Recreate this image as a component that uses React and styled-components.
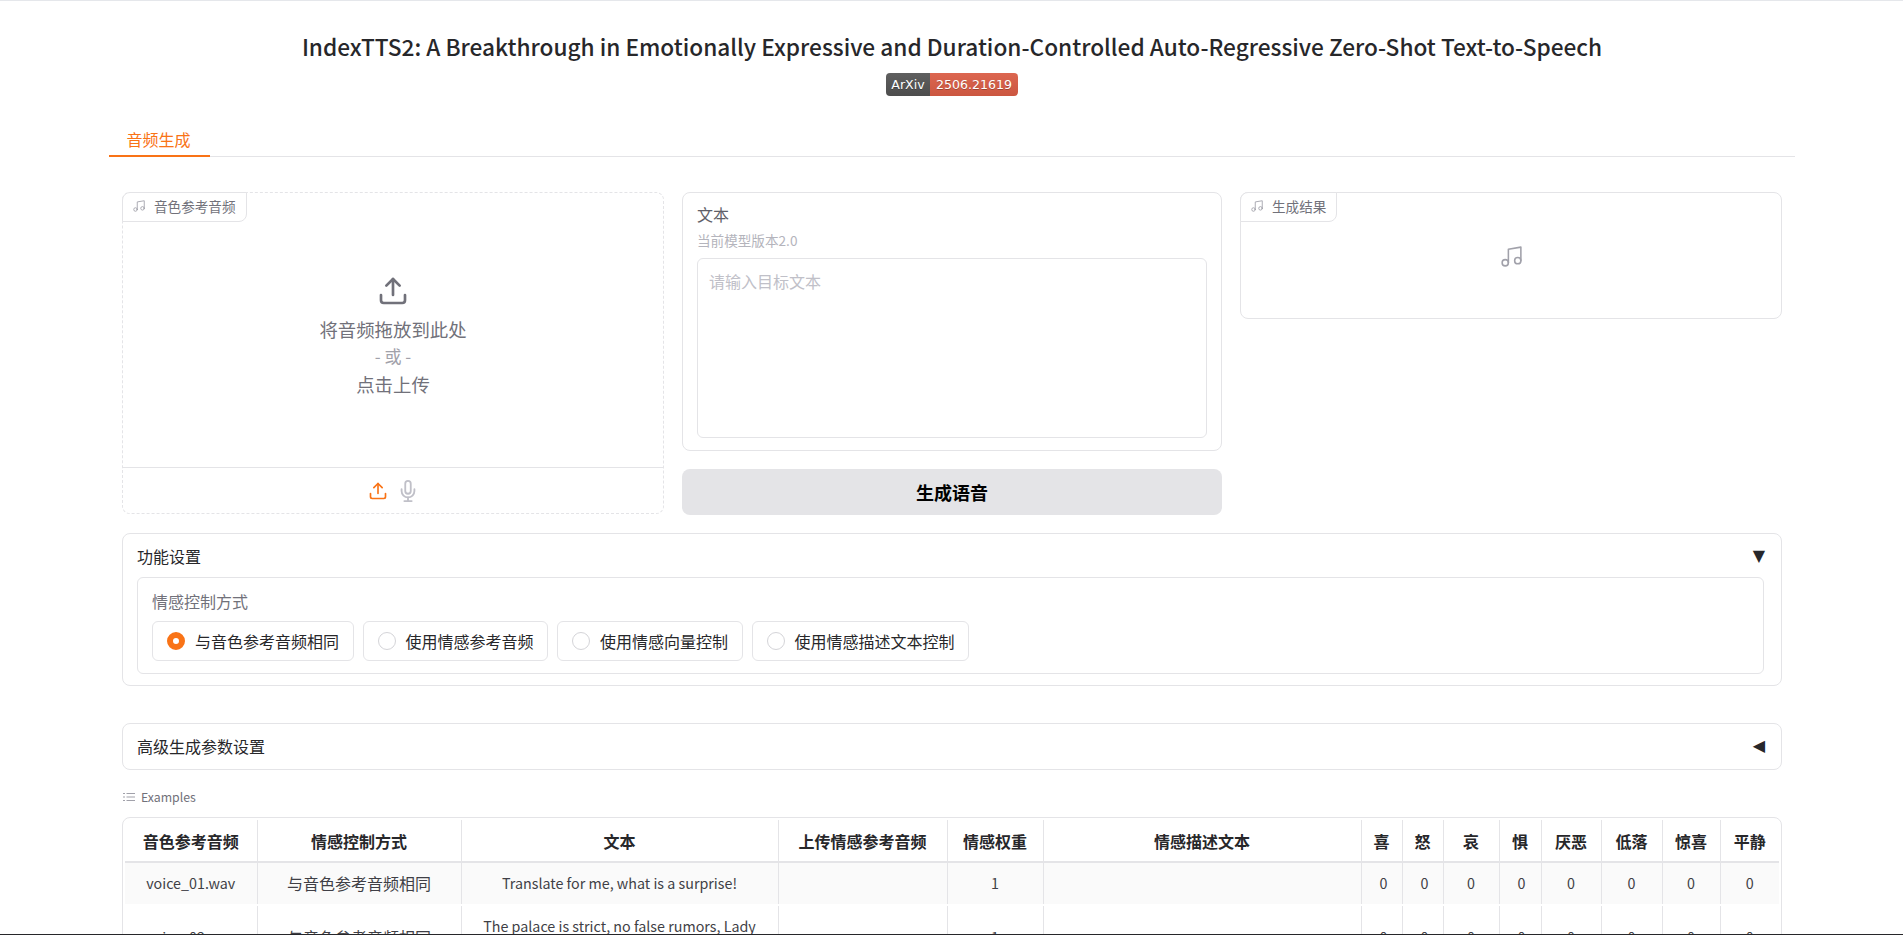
import React from 'react';
import styled, { createGlobalStyle } from 'styled-components';

const GlobalStyle = createGlobalStyle`
  html, body {
    margin: 0;
    padding: 0;
    height: 935px;
    overflow: hidden;
    background: #fff;
  }
  body {
    font-family: "Noto Sans CJK SC", "Noto Sans", sans-serif;
    color: #27272a;
  }
  * { box-sizing: border-box; }
`;

const Page = styled.div`
  height: 935px;
  overflow: hidden;
  border-top: 1px solid #e5e7eb;
  border-bottom: 1px solid #27272a;
  padding: 0 108px 0 109px;
`;

const Title = styled.h1`
  margin: 30px 0 0;
  height: 32px;
  font-size: 22.65px;
  line-height: 32px;
  font-weight: 500;
  text-align: center;
  color: #27272a;
`;

const BadgeRow = styled.div`
  display: flex;
  justify-content: center;
  margin-top: 10px;
`;

const Badge = styled.span`
  width: ${p => p.$width}px;
  height: 23px;
  display: flex;
  align-items: center;
  justify-content: center;
  font-family: "DejaVu Sans", sans-serif;
  font-size: 12.6px;
  color: #fff;
  text-shadow: 0 1px 0 rgba(0, 0, 0, 0.25);
  background: linear-gradient(${p => p.$light}, ${p => p.$dark});
  border-radius: ${p => (p.$left ? '4px 0 0 4px' : '0 4px 4px 0')};
`;

const TabBar = styled.div`
  display: flex;
  margin-top: 24px;
  height: 37px;
  border-bottom: 1px solid #e4e4e7;
`;

const Tab = styled.div`
  width: 101px;
  height: 37px;
  padding-right: 2px;
  text-align: center;
  font-size: 16px;
  line-height: 38px;
  color: #f97316;
  border-bottom: 2px solid #f97316;
`;

const Content = styled.div`
  padding: 35px 13px 0;
  display: flex;
  flex-direction: column;
`;

const TopRow = styled.div`
  display: grid;
  grid-template-columns: 542px 540px 542px;
  gap: 18px;
  align-items: start;
`;

const Column = styled.div`
  display: flex;
  flex-direction: column;
  gap: 18px;
`;

const Block = styled.div`
  position: relative;
  height: ${p => p.$height}px;
  border: 1px ${p => (p.$dashed ? 'dashed' : 'solid')} #e4e4e7;
  border-radius: 8px;
  background: #fff;
`;

const BlockLabel = styled.div`
  position: absolute;
  top: -1px;
  left: -1px;
  height: 30px;
  padding: 0 10px 3px 9px;
  display: flex;
  align-items: center;
  gap: 8px;
  font-size: 13.6px;
  color: #71717a;
  background: #fff;
  border: 1px solid #e4e4e7;
  border-radius: 8px 0 8px 0;
`;

const LabelIcon = styled.svg`
  width: 14px;
  height: 14px;
  fill: none;
  stroke: #a1a1aa;
  stroke-width: 1.5;
  stroke-linecap: round;
  stroke-linejoin: round;
`;

const DropArea = styled.div`
  height: 275px;
  padding-top: 82px;
  display: flex;
  flex-direction: column;
  align-items: center;
  border-bottom: 1px solid #e4e4e7;
`;

const UploadIcon = styled.svg`
  width: ${p => p.$size}px;
  height: ${p => p.$size}px;
  fill: none;
  stroke: ${p => p.$color};
  stroke-width: 2;
  stroke-linecap: round;
  stroke-linejoin: round;
`;

const DropLine = styled.div`
  font-size: ${p => p.$size}px;
  line-height: 28px;
  margin-top: ${p => p.$top}px;
  color: ${p => p.$color};
`;

const SourceBar = styled.div`
  height: 45px;
  display: flex;
  align-items: center;
  justify-content: center;
  gap: 9px;
`;

const TextBlock = styled.div`
  height: 259px;
  padding: 9px 14px 12px 14px;
  border: 1px solid #e4e4e7;
  border-radius: 8px;
  display: flex;
  flex-direction: column;
`;

const FieldLabel = styled.div`
  font-size: 16px;
  line-height: 24px;
  color: #5f5f69;
`;

const FieldInfo = styled.div`
  margin-top: 5px;
  font-size: 13.6px;
  line-height: 18px;
  color: #b4b4bc;
`;

const TextArea = styled.textarea`
  flex: 1;
  margin-top: 9px;
  padding: 10px 11px;
  border: 1px solid #e4e4e7;
  border-radius: 6px;
  resize: none;
  outline: none;
  font: inherit;
  font-size: 16px;
  line-height: 24px;
  &::placeholder { color: #c0c0c8; }
`;

const GenerateButton = styled.button`
  height: 46px;
  border: none;
  border-radius: 8px;
  background: #e4e4e7;
  color: #000;
  font-family: inherit;
  font-size: 18px;
  font-weight: 600;
`;

const EmptyAudio = styled.div`
  height: 124px;
  padding-top: 51px;
  display: flex;
  justify-content: center;
`;

const EmptyIcon = styled.svg`
  width: 25px;
  height: 25px;
  fill: none;
  stroke: #a1a1aa;
  stroke-width: 1.5;
  stroke-linecap: round;
  stroke-linejoin: round;
`;

const Accordion = styled.div`
  margin-top: ${p => p.$top}px;
  padding: 0 14px;
  height: ${p => p.$height}px;
  border: 1px solid #e4e4e7;
  border-radius: 8px;
`;

const AccordionHead = styled.div`
  height: 43px;
  display: flex;
  align-items: center;
  justify-content: space-between;
  font-size: 16px;
  color: #27272a;
`;

const Arrow = styled.span`
  font-family: "DejaVu Sans", sans-serif;
  font-size: 16px;
  margin-right: 2px;
  color: #27272a;
`;

const RadioGroup = styled.div`
  margin-right: 3px;
  height: 97px;
  padding: 11px 14px 0;
  border: 1px solid #e4e4e7;
  border-radius: 6px;
`;

const GroupTitle = styled.div`
  font-size: 16px;
  line-height: 24px;
  color: #71717a;
`;

const RadioRow = styled.div`
  display: flex;
  gap: 9px;
  margin-top: 8px;
`;

const RadioItem = styled.label`
  height: 40px;
  padding: 0 13.5px 0 14px;
  display: flex;
  align-items: center;
  gap: 10px;
  font-size: 16px;
  color: #27272a;
  border: 1px solid #e4e4e7;
  border-radius: 6px;
`;

const RadioDot = styled.span`
  width: 18px;
  height: 18px;
  border-radius: 50%;
  background: #fff;
  border: ${p => (p.$checked ? '6px solid #f97316' : '1px solid #d4d4d8')};
`;

const ExamplesLabel = styled.div`
  margin-top: 17px;
  height: 20px;
  padding-left: 1px;
  display: flex;
  align-items: center;
  gap: 6px;
  font-size: 12.3px;
  color: #71717a;
`;

const ListIcon = styled.svg`
  width: 12px;
  height: 12px;
  fill: none;
  stroke: #a1a1aa;
  stroke-width: 1.2;
`;

const TableWrap = styled.div`
  margin-top: 10px;
  padding: 2px;
  border: 1px solid #e4e4e7;
  border-radius: 8px;
`;

const Table = styled.table`
  width: 100%;
  table-layout: fixed;
  border-collapse: collapse;
  font-size: 16px;
`;

const HeadCell = styled.th`
  height: 42px;
  padding: 0;
  font-weight: 600;
  text-align: center;
  color: #27272a;
  border-right: 1px solid #e4e4e7;
  border-bottom: 2px solid #e4e4e7;
  &:last-child { border-right: none; }
`;

const BodyCell = styled.td`
  padding: 9px 18px 10px;
  text-align: center;
  font-size: ${p => (p.$latin ? '14.3px' : '16px')};
  line-height: 22px;
  color: #3f3f46;
  border-right: 1px solid #e4e4e7;
  border-bottom: 2px solid #fff;
  background: ${p => (p.$odd ? '#fafafa' : '#fff')};
  background-clip: padding-box;
  &:last-child { border-right: none; }
`;

const ColWidths = [132, 204, 317, 169, 96, 318, 41, 41, 56, 42, 60, 61, 58, 59];

const Headers = ['音色参考音频', '情感控制方式', '文本', '上传情感参考音频', '情感权重', '情感描述文本', '喜', '怒', '哀', '惧', '厌恶', '低落', '惊喜', '平静'];

const Rows = [
  ['voice_01.wav', '与音色参考音频相同', 'Translate for me, what is a surprise!', '', '1', '', '0', '0', '0', '0', '0', '0', '0', '0'],
  ['voice_02.wav', '与音色参考音频相同', 'The palace is strict, no false rumors, Lady Qi!', '', '1', '', '0', '0', '0', '0', '0', '0', '0', '0'],
];

const Radios = ['与音色参考音频相同', '使用情感参考音频', '使用情感向量控制', '使用情感描述文本控制'];

const isLatin = text => /^[\x20-\x7e]*$/.test(text);

const MusicPaths = () => (
  <>
    <path d="M9 18V5l12-2v13" />
    <circle cx="6" cy="18" r="3" />
    <circle cx="18" cy="16" r="3" />
  </>
);

const UploadPaths = () => (
  <>
    <path d="M21 15v4a2 2 0 0 1-2 2H5a2 2 0 0 1-2-2v-4" />
    <polyline points="17 8 12 3 7 8" />
    <line x1="12" y1="3" x2="12" y2="15" />
  </>
);

const App = () => {
  return (
    <Page>
      <GlobalStyle />
      <Title>IndexTTS2: A Breakthrough in Emotionally Expressive and Duration-Controlled Auto-Regressive Zero-Shot Text-to-Speech</Title>
      <BadgeRow>
        <Badge $left $width={44} $light="#5f5f5f" $dark="#4d4d4d">ArXiv</Badge>
        <Badge $width={88} $light="#dc6650" $dark="#cb5640">2506.21619</Badge>
      </BadgeRow>
      <TabBar>
        <Tab>音频生成</Tab>
      </TabBar>
      <Content>
        <TopRow>
          <Block $dashed $height={322}>
            <BlockLabel>
              <LabelIcon viewBox="0 0 24 24"><MusicPaths /></LabelIcon>
              音色参考音频
            </BlockLabel>
            <DropArea>
              <UploadIcon $size={32} $color="#71717a" viewBox="0 0 24 24"><UploadPaths /></UploadIcon>
              <DropLine $size={18.4} $top={8} $color="#71717a">将音频拖放到此处</DropLine>
              <DropLine $size={17} $top={-1} $color="#a1a1aa">- 或 -</DropLine>
              <DropLine $size={18.4} $top={0} $color="#71717a">点击上传</DropLine>
            </DropArea>
            <SourceBar>
              <UploadIcon $size={20} $color="#f97316" viewBox="0 0 24 24"><UploadPaths /></UploadIcon>
              <UploadIcon $size={22} $color="#c0c0c8" viewBox="0 0 24 24">
                <path d="M12 1a3 3 0 0 0-3 3v8a3 3 0 0 0 6 0V4a3 3 0 0 0-3-3z" />
                <path d="M19 10v2a7 7 0 0 1-14 0v-2" />
                <line x1="12" y1="19" x2="12" y2="23" />
                <line x1="8" y1="23" x2="16" y2="23" />
              </UploadIcon>
            </SourceBar>
          </Block>
          <Column>
            <TextBlock>
              <FieldLabel>文本</FieldLabel>
              <FieldInfo>当前模型版本2.0</FieldInfo>
              <TextArea placeholder="请输入目标文本" />
            </TextBlock>
            <GenerateButton>生成语音</GenerateButton>
          </Column>
          <Block $height={127}>
            <BlockLabel>
              <LabelIcon viewBox="0 0 24 24"><MusicPaths /></LabelIcon>
              生成结果
            </BlockLabel>
            <EmptyAudio>
              <EmptyIcon viewBox="0 0 24 24"><MusicPaths /></EmptyIcon>
            </EmptyAudio>
          </Block>
        </TopRow>

        <Accordion $top={18} $height={153}>
          <AccordionHead>
            功能设置
            <Arrow>▼</Arrow>
          </AccordionHead>
          <RadioGroup>
            <GroupTitle>情感控制方式</GroupTitle>
            <RadioRow>
              {Radios.map((label, i) => (
                <RadioItem key={label}>
                  <RadioDot $checked={i === 0} />
                  {label}
                </RadioItem>
              ))}
            </RadioRow>
          </RadioGroup>
        </Accordion>

        <Accordion $top={37} $height={47}>
          <AccordionHead>
            高级生成参数设置
            <Arrow>◀</Arrow>
          </AccordionHead>
        </Accordion>

        <ExamplesLabel>
          <ListIcon viewBox="0 0 12 12">
            <path d="M3.5 2.5H12M3.5 6H12M3.5 9.5H12M0 2.5H2M0 6H2M0 9.5H2" />
          </ListIcon>
          Examples
        </ExamplesLabel>
        <TableWrap>
          <Table>
            <colgroup>
              {ColWidths.map((w, i) => <col key={i} width={w} />)}
            </colgroup>
            <thead>
              <tr>
                {Headers.map(h => <HeadCell key={h}>{h}</HeadCell>)}
              </tr>
            </thead>
            <tbody>
              {Rows.map((row, r) => (
                <tr key={r}>
                  {row.map((cell, c) => (
                    <BodyCell key={c} $odd={r === 0} $latin={isLatin(cell)}>{cell}</BodyCell>
                  ))}
                </tr>
              ))}
            </tbody>
          </Table>
        </TableWrap>
      </Content>
    </Page>
  );
};

export default App;
